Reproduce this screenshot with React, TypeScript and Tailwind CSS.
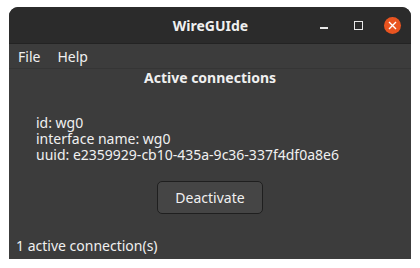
export default function App() {
  return (
    <div className="w-[420px] h-[268px] bg-white pt-[7px] pl-[9px] font-['Noto_Sans',sans-serif] text-[#f0f0f0]">
      <div className="w-[402px] h-[252px] flex flex-col rounded-t-[9px] overflow-hidden bg-[#3c3c3c]">
        {/* title bar */}
        <div className="h-[37px] bg-[#2b2b2b] flex items-center relative border-b border-[#232323]">
          <div className="flex-1 text-center font-bold text-[14px] pl-[1px]">WireGUIde</div>
          <div className="absolute right-0 top-0 h-full flex items-center">
            <div className="w-[8px] h-[1.5px] bg-[#e8e8e8] mt-[6px] mr-[26px]"></div>
            <div className="w-[9px] h-[9px] border border-[#e8e8e8] mr-[21px]"></div>
            <div className="w-[17px] h-[17px] rounded-full bg-[#e95420] flex items-center justify-center mr-[10px]">
              <svg width="9" height="9" viewBox="0 0 9 9">
                <path d="M1 1L8 8M8 1L1 8" stroke="#fff" strokeWidth="1.4" />
              </svg>
            </div>
          </div>
        </div>
        {/* menu */}
        <div className="h-[25px] flex items-center gap-[17px] pl-[9px] text-[14px] border-b border-[#353535]">
          <span>File</span>
          <span>Help</span>
        </div>
        {/* content */}
        <div className="flex-1 flex flex-col">
          <div className="text-center font-bold text-[14px] leading-[18px]">Active connections</div>
          <div className="pl-[27px] mt-[28px] text-[14px] leading-[16px]">
            <div>id: wg0</div>
            <div>interface name: wg0</div>
            <div>uuid: e2359929-cb10-435a-9c36-337f4df0a8e6</div>
          </div>
          <div className="flex justify-center mt-[18px]">
            <button className="w-[106px] h-[33px] rounded-[5px] border border-[#1f1f1f] bg-[#454545] text-[14px]">
              Deactivate
            </button>
          </div>
          <div className="mt-auto pl-[7px] pb-[4px] text-[14px] leading-[18px]">1 active connection(s)</div>
        </div>
      </div>
    </div>
  );
}
